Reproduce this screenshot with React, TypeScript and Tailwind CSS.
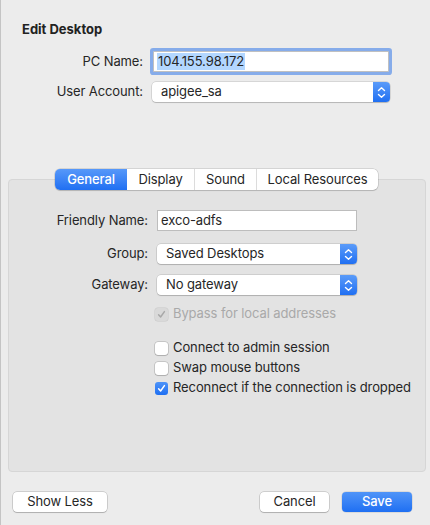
import React from "react";

const font = { fontFamily: "Inter, 'Noto Sans', 'Liberation Sans', sans-serif" };

function Stepper() {
  return (
    <div className="h-full w-[17px] rounded-r-[4px] bg-gradient-to-b from-[#5a9bf9] to-[#1f6ff2] flex items-center justify-center">
      <svg width="9" height="13" viewBox="0 0 9 13" fill="none" stroke="white" strokeWidth="1.4" strokeLinecap="round" strokeLinejoin="round">
        <path d="M1.5 4.5 L4.5 1.8 L7.5 4.5" />
        <path d="M1.5 8.5 L4.5 11.2 L7.5 8.5" />
      </svg>
    </div>
  );
}

function Select({ value, w, h = "h-[20px]" }: { value: string; w: string; h?: string }) {
  return (
    <div className={`${w} ${h} flex bg-white rounded-[4px] shadow-[0_0_0_0.5px_rgba(0,0,0,0.18),0_1px_1px_rgba(0,0,0,0.15)]`}>
      <div className="flex-1 flex items-center pl-[9px] text-[13px] text-[#262626]">{value}</div>
      <Stepper />
    </div>
  );
}

function Check({ checked, disabled, label }: { checked?: boolean; disabled?: boolean; label: string }) {
  return (
    <div className="flex items-center h-[16px] ml-[146px]">
      {checked ? (
        <div className={`w-[13px] h-[13px] rounded-[3px] flex items-center justify-center ${disabled ? "bg-[#d9d9d9] shadow-[0_0_0_0.5px_rgba(0,0,0,0.12)]" : "bg-gradient-to-b from-[#4d93f8] to-[#1d6ff2]"}`}>
          <svg width="9" height="9" viewBox="0 0 9 9" fill="none" stroke={disabled ? "#a8a8a8" : "white"} strokeWidth="1.5" strokeLinecap="round" strokeLinejoin="round">
            <path d="M1.6 4.8 L3.6 7 L7.4 1.6" />
          </svg>
        </div>
      ) : (
        <div className="w-[13px] h-[13px] rounded-[3px] bg-white shadow-[0_0_0_0.5px_rgba(0,0,0,0.25),0_1px_1px_rgba(0,0,0,0.12)]" />
      )}
      <span className={`ml-[5px] text-[13px] ${disabled ? "text-[#a9a9a9]" : "text-[#262626]"}`}>{label}</span>
    </div>
  );
}

export default function App() {
  return (
    <div style={font} className="w-[430px] h-[525px] bg-[#ececec] border-l border-[#c4c4c4] flex flex-col overflow-hidden text-[#262626] tracking-[-0.1px]">
      <div className="mt-[21px] ml-[21px] text-[13px] leading-[16px] font-bold text-[#222] tracking-normal">Edit Desktop</div>

      <div className="mt-[14px] flex items-center">
        <div className="w-[142px] text-right text-[13px]">PC Name:</div>
        <div className="ml-[10px] w-[236px] h-[21px] bg-white border border-[#c0c0c0] ring-[3px] ring-[#86acea] rounded-[1px] flex items-center pl-[3px]">
          <span className="bg-[#b3d7ff] text-[13px] leading-[17px] px-[1px]">104.155.98.172</span>
        </div>
      </div>

      <div className="mt-[10px] flex items-center">
        <div className="w-[142px] text-right text-[13px]">User Account:</div>
        <div className="ml-[9px]">
          <Select value="apigee_sa" w="w-[238px]" />
        </div>
      </div>

      <div className="mt-[67px] ml-[54px] relative z-10 flex h-[21px] w-[323px] rounded-[5px] bg-white shadow-[0_0_0_0.5px_rgba(0,0,0,0.2),0_1px_1px_rgba(0,0,0,0.12)] text-[13px]">
        <div className="w-[72px] flex items-center justify-center rounded-l-[5px] bg-gradient-to-b from-[#5698f9] to-[#1f6ff2] text-white font-medium">General</div>
        <div className="w-[67px] flex items-center justify-center">Display</div>
        <div className="w-[62px] flex items-center justify-center border-l border-[#dcdcdc]">Sound</div>
        <div className="flex-1 flex items-center justify-center border-l border-[#dcdcdc]">Local Resources</div>
      </div>

      <div className="-mt-[11px] ml-[7px] w-[418px] h-[293px] rounded-[4px] bg-[#e3e3e3] border border-[#d6d6d6] flex flex-col pt-[30px]">
        <div className="flex items-center">
          <div className="w-[139px] text-right text-[13px]">Friendly Name:</div>
          <div className="ml-[9px] w-[200px] h-[21px] bg-white border border-[#bdbdbd] flex items-center pl-[3px] text-[13px]">exco-adfs</div>
        </div>
        <div className="mt-[13px] flex items-center">
          <div className="w-[139px] text-right text-[13px]">Group:</div>
          <div className="ml-[9px]">
            <Select value="Saved Desktops" w="w-[200px]" />
          </div>
        </div>
        <div className="mt-[11px] flex items-center">
          <div className="w-[139px] text-right text-[13px]">Gateway:</div>
          <div className="ml-[9px]">
            <Select value="No gateway" w="w-[200px]" />
          </div>
        </div>
        <div className="mt-[11px]">
          <Check checked disabled label="Bypass for local addresses" />
        </div>
        <div className="mt-[18px] flex flex-col gap-[4px]">
          <Check label="Connect to admin session" />
          <Check label="Swap mouse buttons" />
          <Check checked label="Reconnect if the connection is dropped" />
        </div>
      </div>

      <div className="mt-[20px] flex items-center text-[13px]">
        <div className="ml-[12px] w-[94px] h-[20px] bg-white rounded-[4px] shadow-[0_0_0_0.5px_rgba(0,0,0,0.25),0_1px_1px_rgba(0,0,0,0.15)] flex items-center justify-center">Show Less</div>
        <div className="ml-[153px] w-[69px] h-[20px] bg-white rounded-[4px] shadow-[0_0_0_0.5px_rgba(0,0,0,0.25),0_1px_1px_rgba(0,0,0,0.15)] flex items-center justify-center">Cancel</div>
        <div className="ml-[13px] w-[70px] h-[20px] rounded-[4px] bg-gradient-to-b from-[#4f94f8] to-[#1e6ff2] text-white font-medium flex items-center justify-center shadow-[0_0_0_0.5px_rgba(0,0,0,0.15)]">Save</div>
      </div>
    </div>
  );
}
